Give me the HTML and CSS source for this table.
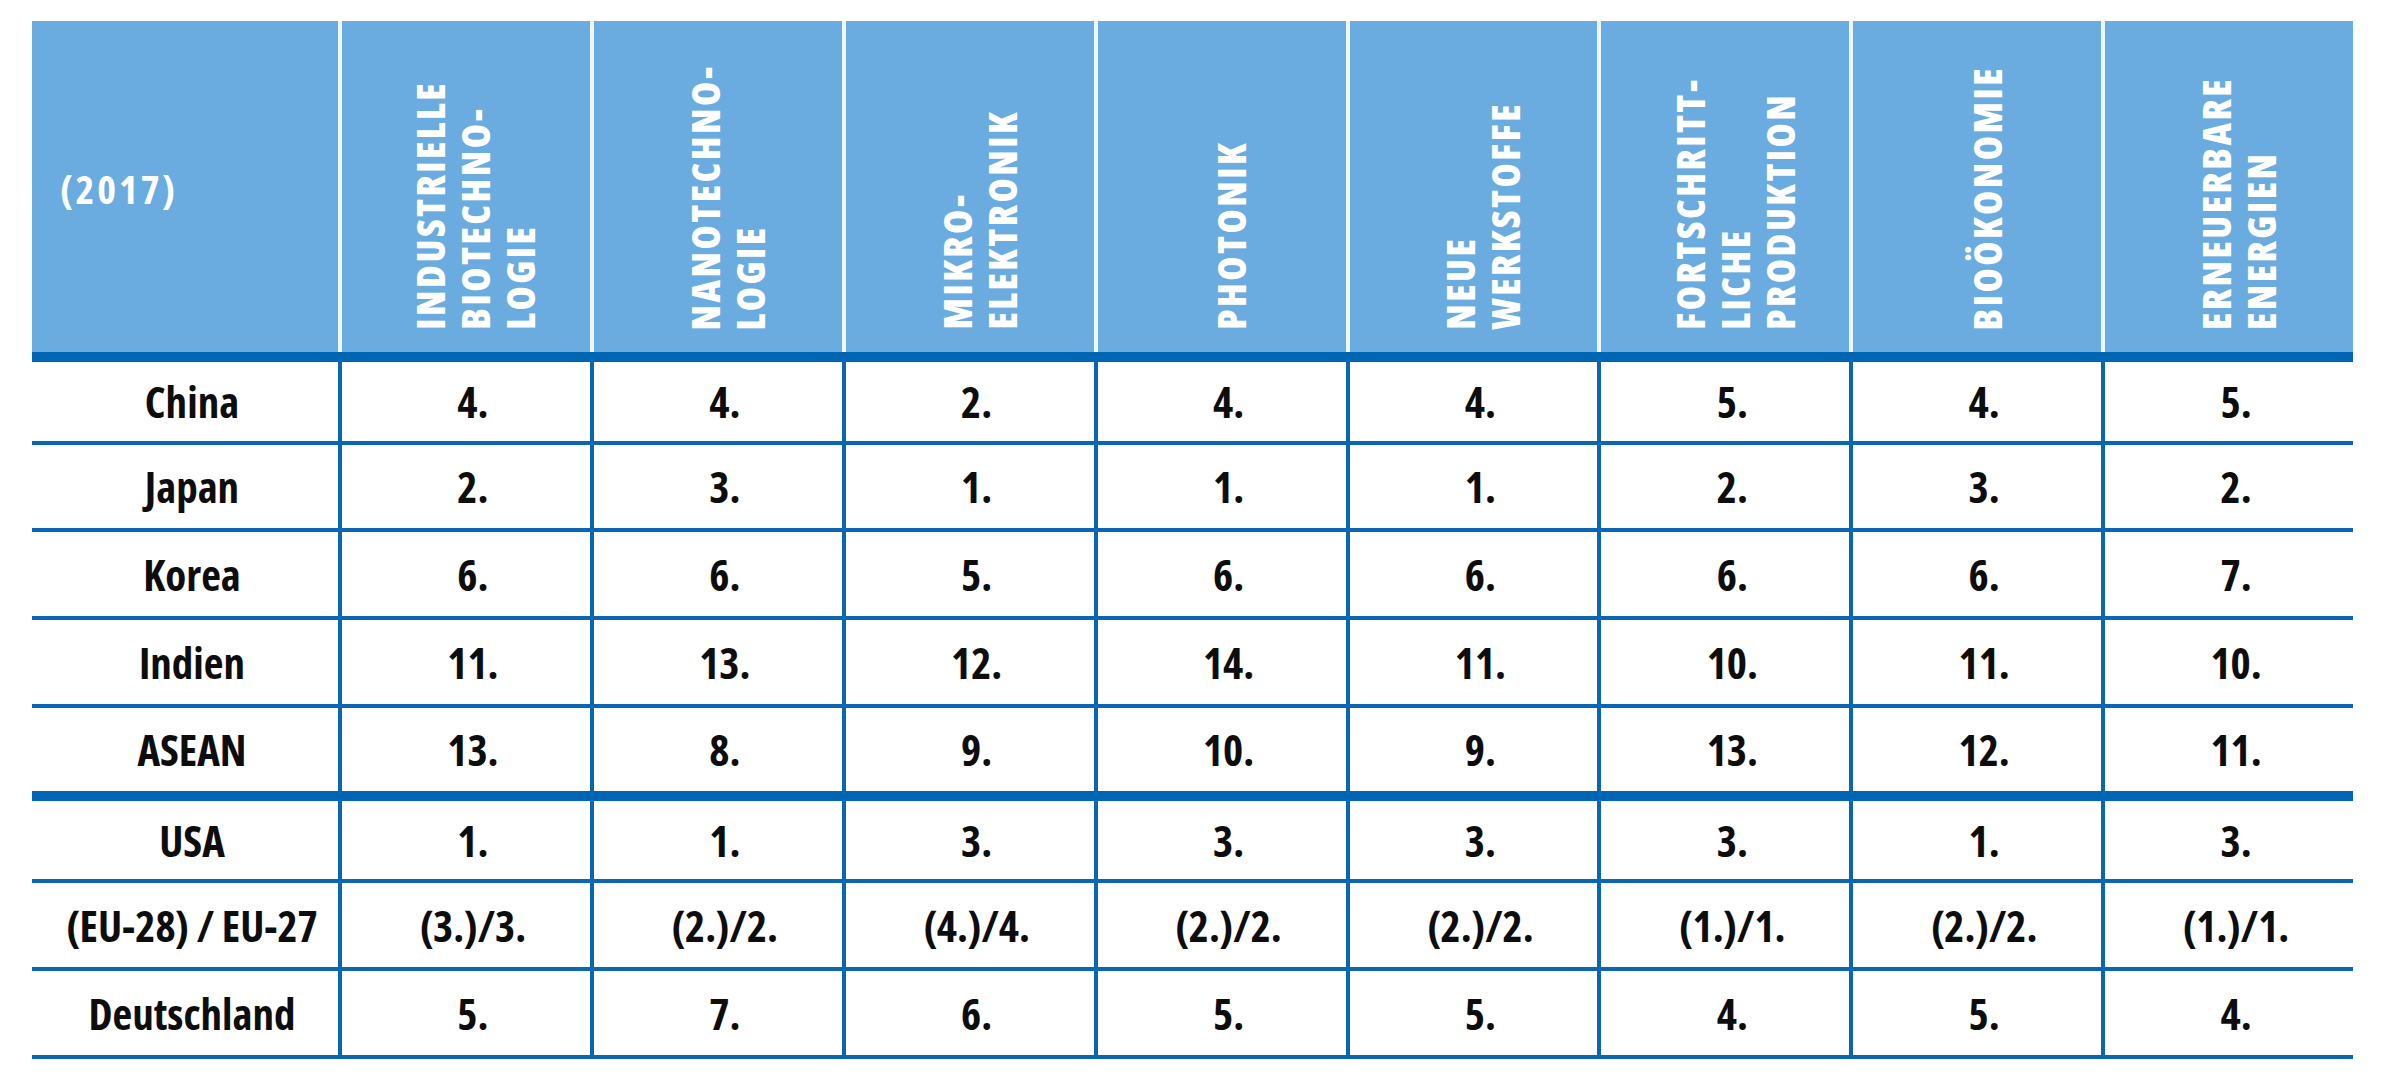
FILE: index.html
```html
<!DOCTYPE html>
<html lang="de">
<head>
<meta charset="utf-8">
<title>Technologie-Rangliste 2017</title>
<link rel="stylesheet" href="styles.css">
</head>
<body>
<div class="table">
  <div class="head">
    <div class="corner">(2017)</div>
    <div class="hcell"><span class="vt">INDUSTRIELLE<br>BIOTECHNO-<br>LOGIE</span></div>
    <div class="hcell"><span class="vt">NANOTECHNO-<br>LOGIE</span></div>
    <div class="hcell"><span class="vt">MIKRO-<br>ELEKTRONIK</span></div>
    <div class="hcell"><span class="vt">PHOTONIK</span></div>
    <div class="hcell"><span class="vt">NEUE<br>WERKSTOFFE</span></div>
    <div class="hcell"><span class="vt">FORTSCHRITT-<br>LICHE<br>PRODUKTION</span></div>
    <div class="hcell"><span class="vt">BIOÖKONOMIE</span></div>
    <div class="hcell"><span class="vt">ERNEUERBARE<br>ENERGIEN</span></div>
  </div>
  <div class="rule"></div>
  <div class="row h83"><div>China</div><div>4.</div><div>4.</div><div>2.</div><div>4.</div><div>4.</div><div>5.</div><div>4.</div><div>5.</div></div>
  <div class="row h87"><div>Japan</div><div>2.</div><div>3.</div><div>1.</div><div>1.</div><div>1.</div><div>2.</div><div>3.</div><div>2.</div></div>
  <div class="row h88"><div>Korea</div><div>6.</div><div>6.</div><div>5.</div><div>6.</div><div>6.</div><div>6.</div><div>6.</div><div>7.</div></div>
  <div class="row h88"><div>Indien</div><div>11.</div><div>13.</div><div>12.</div><div>14.</div><div>11.</div><div>10.</div><div>11.</div><div>10.</div></div>
  <div class="row h83 open"><div>ASEAN</div><div>13.</div><div>8.</div><div>9.</div><div>10.</div><div>9.</div><div>13.</div><div>12.</div><div>11.</div></div>
  <div class="rule"></div>
  <div class="row h82"><div>USA</div><div>1.</div><div>1.</div><div>3.</div><div>3.</div><div>3.</div><div>3.</div><div>1.</div><div>3.</div></div>
  <div class="row h88"><div>(EU-28) / EU-27</div><div>(3.)/3.</div><div>(2.)/2.</div><div>(4.)/4.</div><div>(2.)/2.</div><div>(2.)/2.</div><div>(1.)/1.</div><div>(2.)/2.</div><div>(1.)/1.</div></div>
  <div class="row h88"><div>Deutschland</div><div>5.</div><div>7.</div><div>6.</div><div>5.</div><div>5.</div><div>4.</div><div>5.</div><div>4.</div></div>
</div>
</body>
</html>
```
FILE: styles.css
```css
* {
  box-sizing: border-box;
}

body {
  margin: 0;
  background: #ffffff;
  font-family: "Open Sans", "DejaVu Sans", sans-serif;
  font-stretch: 80%;
  font-weight: 700;
}

.table {
  margin: 21px 0 0 32px;
  width: 2321px;
}

.head,
.row {
  display: grid;
  grid-template-columns: 306px repeat(8, 1fr);
}

.head {
  height: 331px;
  background: #6bace0;
}

.corner {
  display: flex;
  align-items: center;
  padding-left: 28px;
  padding-top: 4px;
  color: #ffffff;
  font-size: 40px;
  font-weight: 700;
  font-stretch: 75%;
  letter-spacing: 3px;
}

.hcell {
  border-left: 4px solid #eef5fb;
  display: flex;
  justify-content: center;
  align-items: flex-end;
  padding: 0 0 22px 18px;
}

.vt {
  writing-mode: vertical-rl;
  transform: rotate(180deg);
  color: #ffffff;
  font-size: 39px;
  font-weight: 800;
  font-stretch: 83%;
  line-height: 45px;
  letter-spacing: 2.5px;
  white-space: nowrap;
}

.rule {
  height: 10px;
  background: #0066b3;
}

.row {
  border-bottom: 4px solid #0a66b5;
  font-size: 43px;
  color: #0d0d0d;
}

.row.open {
  border-bottom: none;
}

.row > div {
  display: flex;
  align-items: center;
  justify-content: center;
  padding-left: 14px;
  white-space: nowrap;
}

.row > div + div {
  border-left: 4px solid #0a66b5;
}

.h82 { height: 82px; }
.h83 { height: 83px; }
.h87 { height: 87px; }
.h88 { height: 88px; }
```
